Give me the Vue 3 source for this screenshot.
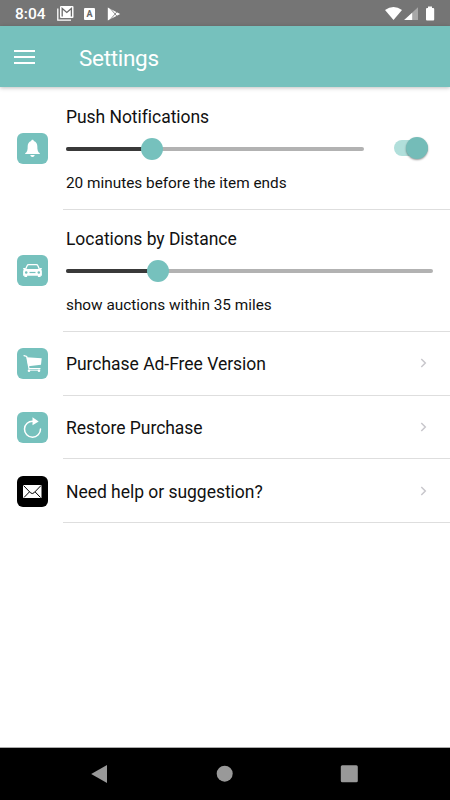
<template>
  <div class="screen">
    <div class="status-bar">
      <span class="status-bar__time">8:04</span>
      <svg class="status-bar__gmail" width="17" height="15" viewBox="0 0 17 15">
        <path d="M.8 2.500V14.200h13.200" fill="none" stroke="#fff" stroke-width="1.300" />
        <rect x="3" y="0" width="13.500" height="12" rx="1" fill="#fff" />
        <path d="M5.200 10.500V2.400l4.600 4.100 4.600-4.100v8.100" fill="none" stroke="#6b6b6b" stroke-width="1.300" />
      </svg>
      <span class="status-bar__badge">A</span>
      <svg class="status-bar__play" width="14" height="14" viewBox="0 0 14 14">
        <path d="M.8.4v13.200L13.200 7z" fill="#fff" />
        <path d="M3 1.200 9.800 9M3 12.800 9.800 5" fill="none" stroke="#757575" stroke-width=".8" />
      </svg>
      <svg class="status-bar__signals" width="51" height="16" viewBox="0 0 51 16">
        <path d="M0 4Q8.500-2.200 17 4L8.500 14z" fill="#fff" />
        <path d="M33 1.300V14H19.200z" fill="#a8a8a8" />
        <path d="M27.200 6.700V14h-8z" fill="#fff" />
        <path d="M43 .6h4v1.400h1.200q1 0 1 1V13.400q0 1-1 1h-6.200q-1 0-1-1V3q0-1 1-1h1z" fill="#fff" />
      </svg>
    </div>

    <header class="toolbar">
      <button class="toolbar__menu" type="button" aria-label="Menu">
        <span></span>
        <span></span>
        <span></span>
      </button>
      <h1 class="toolbar__title">Settings</h1>
    </header>

    <main class="settings">
      <section v-for="item in sliders" :key="item.id" class="slider-row">
        <span class="tile">
          <svg v-if="item.id === 'push'" width="31" height="31" viewBox="0 0 31 31" fill="#fff">
            <path d="M15.500 6.800c.8 0 1.200.5 1.300 1.100 2.300.7 3.500 2.700 3.500 5.100 0 4 .5 6 2.500 7.300v.8H8.200v-.8c2-1.300 2.500-3.300 2.500-7.300 0-2.400 1.200-4.400 3.500-5.100.1-.6.500-1.100 1.300-1.100z" />
            <path d="M13.300 22h4.400c-.2 1.300-1 2-2.200 2s-2-.7-2.200-2z" />
          </svg>
          <svg v-else width="31" height="31" viewBox="0 0 31 31">
            <path
              d="M8.500 14.500 10.200 10.600Q10.600 9.600 11.700 9.600H19.300Q20.400 9.600 20.800 10.600L22.500 14.500"
              fill="none"
              stroke="#fff"
              stroke-width="1.300"
            />
            <path d="M6 13h2.300l.4 1h13.600l.4-1H25l-.7 1.700q.6.700.6 1.800v4.200h-1.300v1.400h-2.700v-1.400H10.100v1.400H7.400v-1.400H6.100v-4.200q0-1.100.6-1.800z" fill="#fff" />
            <circle cx="9.200" cy="17.400" r="1.250" fill="#76c1bd" />
            <circle cx="21.800" cy="17.400" r="1.250" fill="#76c1bd" />
            <path d="M12.500 17.500h6" stroke="#76c1bd" stroke-width="1.200" />
          </svg>
        </span>
        <div class="slider-row__body">
          <div class="slider-row__title">{{ item.title }}</div>
          <div class="slider-row__controls">
            <div class="range">
              <div class="range__fill" :style="{ width: item.position + 'px' }"></div>
              <div class="range__knob"></div>
            </div>
            <button
              v-if="item.toggle"
              class="toggle"
              :class="{ 'toggle--on': pushEnabled }"
              type="button"
              role="switch"
              :aria-checked="pushEnabled"
              @click="pushEnabled = !pushEnabled"
            >
              <span class="toggle__knob"></span>
            </button>
          </div>
          <div class="slider-row__note">{{ item.note }}</div>
        </div>
      </section>

      <section v-for="item in links" :key="item.id" class="link-row">
        <span class="tile" :class="{ 'tile--dark': item.id === 'help' }">
          <svg v-if="item.id === 'cart'" width="31" height="31" viewBox="0 0 31 31">
            <path d="M7 7.700 9.700 8.500 12 20.700H23" fill="none" stroke="#fff" stroke-width="1.200" stroke-linecap="round" />
            <path d="M9.600 9.200 24.700 10.200 24 16.800 11.300 18.300z" fill="#fff" />
            <path d="M11 22.300h12" stroke="#fff" stroke-width=".8" />
            <circle cx="12" cy="22.800" r="1.300" fill="#fff" />
            <circle cx="22" cy="22.800" r="1.300" fill="#fff" />
          </svg>
          <svg v-else-if="item.id === 'restore'" width="31" height="31" viewBox="0 0 31 31">
            <path d="M16 9.200A8 8 0 1 0 23.500 17" fill="none" stroke="#fff" stroke-width="1.500" stroke-linecap="round" />
            <path d="M15.500 5.200 21.700 9.400 15.500 13.200z" fill="#fff" />
          </svg>
          <svg v-else width="31" height="31" viewBox="0 0 31 31">
            <rect x="6" y="9" width="18.500" height="13" fill="#fff" />
            <path
              d="M6.500 9.500 13.500 16.800Q15.300 18.300 17 16.800L24 9.500M7 21.500 12.500 15.800M23.500 21.500 18 15.800"
              fill="none"
              stroke="#000"
              stroke-width="1"
            />
          </svg>
        </span>
        <div class="link-row__body">
          <span class="link-row__title">{{ item.title }}</span>
          <svg class="link-row__arrow" width="7" height="10" viewBox="0 0 7 10">
            <path d="M1.300 1 5.300 5 1.300 9" fill="none" stroke="#c8c7cc" stroke-width="1.500" />
          </svg>
        </div>
      </section>
    </main>

    <nav class="nav-bar">
      <svg width="18" height="20" viewBox="0 0 18 20">
        <path d="M.2 10 16 1.100v17.800z" fill="#999" />
      </svg>
      <svg width="18" height="18" viewBox="0 0 18 18">
        <circle cx="8.700" cy="8.700" r="8" fill="#999" />
      </svg>
      <svg width="18" height="18" viewBox="0 0 18 18">
        <rect x=".8" y=".2" width="17" height="17" rx="1.500" fill="#999" />
      </svg>
    </nav>
  </div>
</template>

<script setup>
import { ref } from 'vue'

const pushEnabled = ref(true)

const sliders = [
  {
    id: 'push',
    title: 'Push Notifications',
    note: '20 minutes before the item ends',
    position: 86,
    toggle: true
  },
  {
    id: 'distance',
    title: 'Locations by Distance',
    note: 'show auctions within 35 miles',
    position: 92,
    toggle: false
  }
]

const links = [
  { id: 'cart', title: 'Purchase Ad-Free Version' },
  { id: 'restore', title: 'Restore Purchase' },
  { id: 'help', title: 'Need help or suggestion?' }
]
</script>

<style>
body {
  margin: 0;
}
</style>

<style scoped>
.screen {
  display: flex;
  flex-direction: column;
  width: 450px;
  height: 800px;
  overflow: hidden;
  background: #fff;
  color: #111;
  font-family: Roboto, sans-serif;
}

svg {
  display: block;
  flex: none;
}

button {
  padding: 0;
  border: 0;
  background: none;
}

.status-bar {
  display: flex;
  align-items: center;
  box-sizing: border-box;
  height: 26px;
  padding: 1px 14px 0 15px;
  background: #757575;
  color: #fff;
}

.status-bar__time {
  width: 42px;
  font-size: 15.5px;
  font-weight: 500;
  line-height: 26px;
}

.status-bar__badge {
  width: 11px;
  height: 12px;
  margin-left: 10px;
  border-radius: 1px;
  background: #fff;
  color: #666;
  font-size: 9px;
  font-weight: 700;
  line-height: 12px;
  text-align: center;
}

.status-bar__play {
  margin-left: 12px;
}

.status-bar__signals {
  margin-left: auto;
}

.toolbar {
  display: flex;
  align-items: center;
  flex: none;
  height: 61px;
  padding-left: 14px;
  background: #76c1bd;
  box-shadow: 0 1px 4px rgba(0, 0, 0, 0.25);
}

.toolbar__menu {
  display: flex;
  flex-direction: column;
  gap: 4px;
  width: 21px;
}

.toolbar__menu span {
  height: 2px;
  background: #fff;
}

.toolbar__title {
  margin: 2px 0 0 44px;
  color: #fff;
  font-size: 22.5px;
  font-weight: 400;
  letter-spacing: -0.3px;
}

.settings {
  flex: 1;
}

.slider-row,
.link-row {
  display: flex;
  align-items: center;
  padding-left: 17.4px;
}

.tile {
  flex: none;
  width: 31px;
  height: 31px;
  margin-right: 14.6px;
  border-radius: 6px;
  background: #76c1bd;
}

.tile--dark {
  background: #000;
}

.slider-row .tile {
  margin-bottom: 1px;
}

.slider-row__body {
  flex: 1;
  box-sizing: border-box;
  height: 122px;
  padding: 18px 17px 0 3px;
  border-bottom: 1px solid #dedede;
}

.slider-row:first-child .slider-row__body {
  height: 123px;
  padding-top: 19px;
}

.slider-row__title {
  font-size: 17.5px;
  letter-spacing: -0.04px;
  line-height: 22px;
}

.slider-row__controls {
  display: flex;
  align-items: center;
  height: 42px;
}

.range {
  display: flex;
  align-items: center;
  flex: 1;
  height: 4px;
  border-radius: 2px;
  background: #b2b2b2;
}

.range__fill {
  height: 4px;
  border-radius: 2px;
  background: #393939;
}

.range__knob {
  width: 22px;
  height: 22px;
  margin-left: -11px;
  border-radius: 50%;
  background: #76c1bd;
}

.toggle {
  display: flex;
  align-items: center;
  width: 34px;
  height: 16px;
  margin: 0 5px 2px 30px;
  border-radius: 8px;
  background: #c9c9c9;
}

.toggle--on {
  justify-content: flex-end;
  background: #b1dfdb;
}

.toggle__knob {
  width: 22px;
  height: 22px;
  border-radius: 50%;
  background: #74bcb8;
  box-shadow: 0 1px 2px rgba(0, 0, 0, 0.4);
}

.slider-row__note {
  padding-top: 1px;
  font-size: 15.35px;
  line-height: 24px;
}

.link-row__body {
  display: flex;
  align-items: center;
  justify-content: space-between;
  flex: 1;
  box-sizing: border-box;
  height: 63.66px;
  padding: 2px 23px 0 3px;
  border-bottom: 1px solid #dedede;
}

.link-row__title {
  font-size: 17.5px;
  letter-spacing: -0.03px;
}

.link-row__arrow {
  margin-bottom: 2px;
}

.nav-bar {
  display: flex;
  align-items: center;
  justify-content: space-between;
  box-sizing: border-box;
  height: 53px;
  padding: 0 92px 0 91px;
  border-top: 1px solid #aaa;
  background: #000;
}
</style>
